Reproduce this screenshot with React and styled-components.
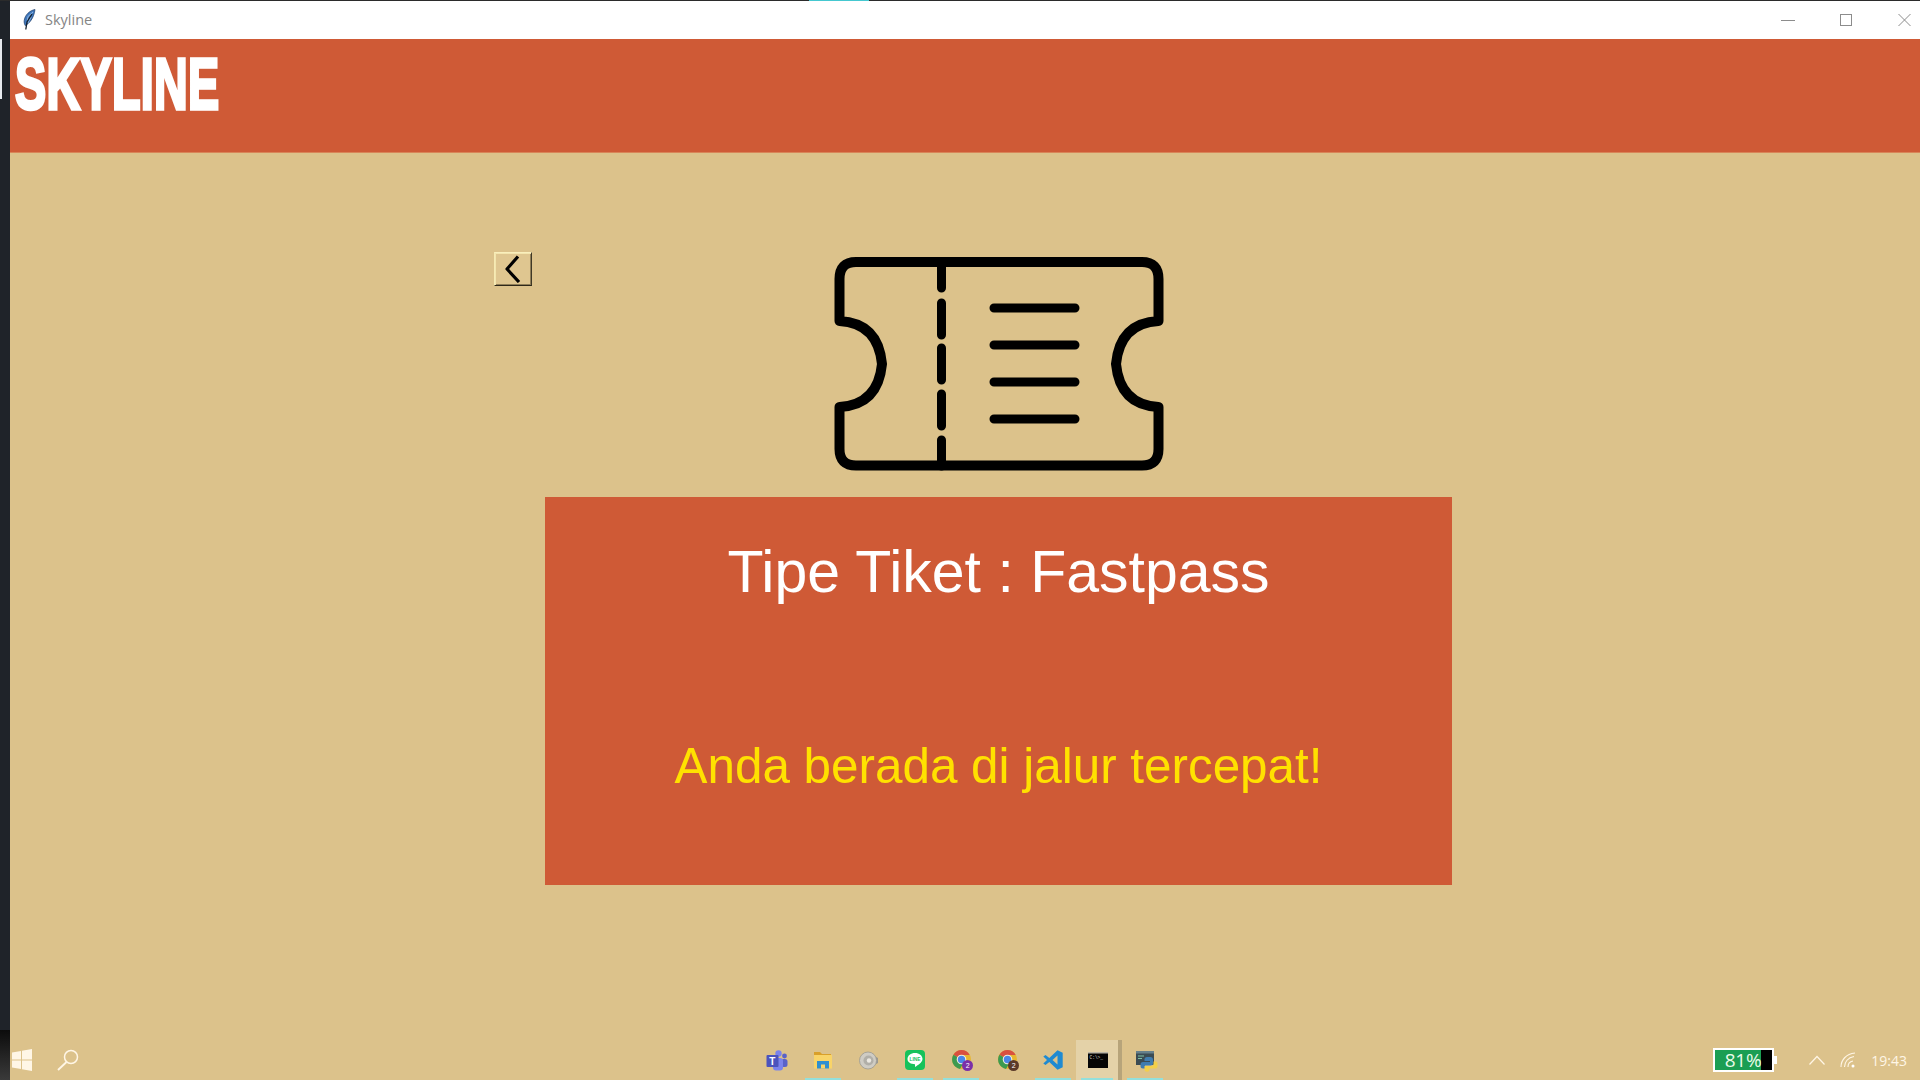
import React from "react";
import styled, { createGlobalStyle } from "styled-components";

const Global = createGlobalStyle`
  html, body { margin: 0; padding: 0; height: 100%; overflow: hidden; }
  #root { height: 100%; }
`;
const Screen = styled.div`
  width: 1920px; height: 1080px; display: flex; flex-direction: column;
  background: #1f2329; overflow: hidden;
`;
const TopEdge = styled.div`
  height: 1px; flex: none; padding-left: 809px; background: #2b2b2b;
`;
const TopAccent = styled.div`
  width: 60px; height: 1px; background: #45c8d0;
`;
const Desktop = styled.div`flex: 1; display: flex; min-height: 0;`;
const LeftStrip = styled.div`
  width: 10px; flex: none; display: flex; flex-direction: column; justify-content: space-between;
  background: #1f2329; padding-top: 38px; box-sizing: border-box;
`;
const StripMark = styled.div`width: 2px; height: 60px; background: #e8eaee;`;
const StripEnd = styled.div`height: 50px; background: linear-gradient(#0c0c0c, #3a3a3a);`;
const Window = styled.div`flex: 1; display: flex; flex-direction: column; min-width: 0;`;
const TitleBar = styled.div`
  height: 38px; flex: none; background: #fff; display: flex; align-items: center;
  padding-left: 13px;
`;
const TitleText = styled.span`
  font: 14.5px "Open Sans", sans-serif; color: #858585; margin-left: 9px; flex: 1; margin-top: -1px;
`;
const Controls = styled.div`display: flex; align-items: center; padding-right: 7px;`;
const ControlIcon = styled.svg`width: 16px; height: 16px; margin-left: 42px; display: block;`;
const Header = styled.div`
  height: 114px; flex: none; background: #cf5a36; padding: 17px 0 0 5px; box-sizing: border-box;
  border-bottom: 1px solid #d98558;
`;
const Brand = styled.h1`
  margin: 0; font: 700 72px/56px "Liberation Sans", sans-serif;
  color: #fff; -webkit-text-stroke: 3.4px #fff; letter-spacing: 0.5px;
  transform-origin: 0 0; transform: scaleX(0.648);
`;
const Body = styled.main`
  flex: 1; min-height: 0; background: #dcc28b; display: flex; flex-direction: column;
`;
const Content = styled.div`
  flex: 1; padding: 99px 0 0 484px;
`;
const TopRow = styled.div`display: flex; align-items: flex-start;`;
const BackButton = styled.button`
  width: 38px; height: 34px; padding: 0; box-sizing: border-box; background: #dfc690;
  border: 1px solid; border-color: #f9efbd #3f3826 #2e2819 #f6eab4;
  box-shadow: inset 1px 1px 0 #f3e5ae, inset -1px -1px 0 #8f7e58;
  display: flex; align-items: center; justify-content: center;
`;
const TicketArt = styled.svg`
  width: 336px; height: 221px; margin: 1px 0 0 299px; display: block; flex: none;
`;
const Panel = styled.section`
  width: 907px; height: 388px; margin: 23px 0 0 51px; background: #cf5a36;
  display: flex; flex-direction: column; align-items: center;
`;
const TicketType = styled.div`
  font: 59px/70px "Liberation Sans", Arial, sans-serif; color: #fff; margin-top: 40px;
`;
const Slogan = styled.div`
  font: 49.4px/60px "Liberation Sans", Arial, sans-serif; color: #ffe100; margin-top: 129px;
`;
const Taskbar = styled.footer`
  height: 40px; flex: none; display: flex; align-items: stretch; position: relative;
`;
const StartArea = styled.div`
  display: flex; align-items: center; padding: 0 0 0 2px; gap: 25px; width: 744px; box-sizing: border-box;
`;
const Apps = styled.div`display: flex; align-items: stretch;`;
const AppSlot = styled.div`
  width: 46px; display: flex; align-items: center; justify-content: center; position: relative;
  background: ${p => (p.$active ? "#e4d2a8" : "transparent")};
  border-right: ${p => (p.$active ? "4px solid #b7a47a" : "0")};
  padding-left: ${p => (p.$active ? "2px" : "0")};
  box-sizing: border-box;
  &::after {
    content: ""; position: absolute; left: 5px; right: 5px; bottom: 0; height: 2px;
    background: ${p => (p.$open ? "#93e0dc" : "transparent")};
  }
`;
const Tray = styled.div`
  flex: 1; display: flex; align-items: center; padding: 0 13px 0 0; justify-content: flex-end;
`;
const Battery = styled.div`
  width: 61px; height: 24px; border: 2px solid #fff; box-sizing: border-box; display: flex;
  position: relative; background: #000; margin-right: 35px;
  &::after { content: ""; position: absolute; right: -5px; top: 6px; width: 3px; height: 8px; background: #fff; }
`;
const BatteryFill = styled.div`
  width: 46px; background: #1b9e53; color: #eafbe8; font: 19px/20px "Open Sans", sans-serif; text-align: right;
  white-space: nowrap; letter-spacing: -0.3px;
`;
const TrayIcon = styled.svg`display: block; margin-right: ${p => p.$gap}px; flex: none;`;
const Clock = styled.span`font: 14px "Open Sans", sans-serif; color: #fff6e6;`;

const Feather = () => (
  <svg width="13" height="22" viewBox="0 0 13 22">
    <path d="M12 .5C7 1.500 2 5.500 1.200 11.500c-.3 2 .3 3.500.9 5C6 15 11 9 12 .5z" fill="#3f78bd" stroke="#1b3a66" strokeWidth=".7" />
    <path d="M10 3 5 7.500l-.6 4M8 8l-3 6" fill="none" stroke="#a9c8e8" strokeWidth=".8" />
    <path d="M9 5 4 13 2.800 20.500" fill="none" stroke="#14202e" strokeWidth="1.300" />
  </svg>
);
const Ticket = () => (
  <TicketArt viewBox="831 253 336 221">
    <g fill="none" stroke="#000" strokeWidth="10" strokeLinecap="round" strokeLinejoin="round">
      <path d="M856 262H1142Q1158.500 262 1158.500 279V321Q1120 323 1116 364Q1120 405 1158.500 407V449Q1158.500 465.500 1142 465.500H856Q839.500 465.500 839.500 449V407Q878 405 882 364Q878 323 839.500 321V279Q839.500 262 856 262Z" />
    </g>
    <g fill="none" stroke="#000" strokeWidth="9" strokeLinecap="round">
      <path d="M941.500 262V288M941.500 303V335M941.500 348V380M941.500 394V426M941.500 440V466" />
      <path d="M994 308H1075M994 345H1075M994 382H1075M994 419H1075" />
    </g>
  </TicketArt>
);
const Teams = () => (
  <svg width="22" height="21" viewBox="0 0 22 21">
    <circle cx="12.500" cy="3.500" r="3.200" fill="#7b83eb" /><circle cx="18.500" cy="6" r="2.400" fill="#5a62c9" />
    <rect x="15" y="9" width="6.500" height="8" rx="2.500" fill="#5a62c9" />
    <rect x="7" y="8" width="10" height="12.500" rx="3" fill="#7b83eb" />
    <rect x="0.500" y="5" width="12" height="12" rx="1" fill="#4b53bc" />
    <text x="3.200" y="14.500" fontFamily="Liberation Sans" fontWeight="700" fontSize="10" fill="#fff">T</text>
  </svg>
);
const Folder = () => (
  <svg width="20" height="18" viewBox="0 0 20 18">
    <path d="M1 1h6l2 2h9v3H1z" fill="#d9a02a" /><rect x="1" y="4" width="18" height="13.500" fill="#f9d468" />
    <rect x="4" y="10" width="12" height="7.500" fill="#2f8fd0" /><rect x="8" y="13.500" width="4" height="4" fill="#f9d468" />
  </svg>
);
const Speaker = () => (
  <svg width="20" height="21" viewBox="0 0 20 21">
    <path d="M13 5l6 3v5l-6 3z" fill="#9a9890" />
    <circle cx="9" cy="10.500" r="8.500" fill="#cfccc4" stroke="#9b9990" strokeWidth=".8" />
    <circle cx="9.500" cy="10.500" r="5" fill="#b1afa8" /><circle cx="10" cy="10.500" r="2.200" fill="#ece9e2" />
  </svg>
);
const Line = () => (
  <svg width="20" height="20" viewBox="0 0 20 20">
    <rect width="20" height="20" rx="4" fill="#16c25b" />
    <path d="M10 3c4.200 0 7.500 2.600 7.500 6 0 3.200-4.300 6-7.500 8v-2.800c-4.200 0-7.500-2-7.500-5.200C2.500 5.600 5.800 3 10 3z" fill="#fff" />
    <text x="4.500" y="11" fontFamily="Liberation Sans" fontWeight="700" fontSize="4.800" fill="#16c25b">LINE</text>
  </svg>
);
const Chrome = ({ badge }) => (
  <svg width="21" height="21" viewBox="0 0 21 21" style={{ transform: "translate(1px, 0)" }}>
    <circle cx="9.500" cy="9.500" r="9.500" fill="#e7b52f" />
    <path d="M9.500 0a9.500 9.500 0 0 1 8.200 5H9.500a4.500 4.500 0 0 0-3.900 2.250L1.400 4.700A9.500 9.500 0 0 1 9.500 0z" fill="#d9503f" />
    <path d="M1.400 4.700A9.500 9.500 0 0 0 8 18.900L11.500 13H8a4.500 4.500 0 0 1-2.400-5.750z" fill="#3d9a51" />
    <circle cx="9.500" cy="9.500" r="4.800" fill="#f3eee0" /><circle cx="9.500" cy="9.500" r="3.700" fill="#4a86e8" />
    <circle cx="15.500" cy="15.500" r="5.500" fill={badge} />
    <text x="13.800" y="18" fontFamily="Liberation Sans" fontSize="7" fill="#fff">2</text>
  </svg>
);
const VSCode = () => (
  <svg width="20" height="20" viewBox="0 0 20 20">
    <path d="M14.500.3 19.700 2.800v14.400l-5.200 2.500L6.300 12 2.500 15 .3 13.500l3.700-3.500L.3 6.500 2.500 5l3.800 3z" fill="#1f8ad2" />
    <path d="M14.500 5.500 9.500 10l5 4.500z" fill="#dcc28b" />
  </svg>
);
const Terminal = () => (
  <svg width="20" height="16" viewBox="0 0 20 16">
    <rect width="20" height="16" fill="#050505" /><rect width="20" height="1.500" fill="#b9b4a6" />
    <text x="1.500" y="6.500" fontFamily="Liberation Mono" fontSize="4.500" fill="#d8d8d8">C:\&gt;_</text>
  </svg>
);
const PythonApp = () => (
  <svg width="20" height="21" viewBox="0 0 22 21" style={{ transform: "translate(2px, 1px) scale(1.1)" }}>
    <rect x="0" y="0" width="18" height="14" fill="#3b4b53" /><rect x="0" y="0" width="18" height="2.500" fill="#66808c" />
    <path d="M2 5h6M2 7.500h4" stroke="#7fc1a5" />
    <path d="M14 6h-3a2.500 2.500 0 0 0-2.500 2.500V10H14v1H7a2.500 2.500 0 0 0-2.500 2.500V15A2.500 2.500 0 0 0 7 17.500h2v-3h5.500A2.500 2.500 0 0 0 17 12V8.500A2.500 2.500 0 0 0 14 6z" fill="#3f7cb0" />
    <path d="M17.500 10.500H20a2 2 0 0 1 1.500 2V15a2.500 2.500 0 0 1-2.500 2.500h-5.500v.8a2.500 2.500 0 0 1-5 0V15H15a2.500 2.500 0 0 0 2.500-2.500z" fill="#f3cf4a" />
  </svg>
);

const apps = [
  { key: "teams", icon: <Teams /> },
  { key: "folder", icon: <Folder />, open: true },
  { key: "speaker", icon: <Speaker /> },
  { key: "line", icon: <Line />, open: true },
  { key: "chrome1", icon: <Chrome badge="#7b2fa8" />, open: true },
  { key: "chrome2", icon: <Chrome badge="#5b3a29" /> },
  { key: "vscode", icon: <VSCode />, open: true },
  { key: "terminal", icon: <Terminal />, open: true, active: true },
  { key: "python", icon: <PythonApp />, open: true },
];

export default function App() {
  return (
    <Screen>
      <Global />
      <TopEdge><TopAccent /></TopEdge>
      <Desktop>
        <LeftStrip><StripMark /><StripEnd /></LeftStrip>
        <Window>
          <TitleBar>
            <Feather />
            <TitleText>Skyline</TitleText>
            <Controls>
              <ControlIcon viewBox="0 0 16 16"><path d="M0 8.500H14" stroke="#8c8c8c" strokeWidth="1" /></ControlIcon>
              <ControlIcon viewBox="0 0 16 16"><rect x="1.500" y="2.500" width="11" height="11" fill="none" stroke="#8c8c8c" strokeWidth="1" /></ControlIcon>
              <ControlIcon viewBox="0 0 16 16"><path d="M1.500 2 13.500 14M13.500 2 1.500 14" stroke="#8c8c8c" strokeWidth="1" /></ControlIcon>
            </Controls>
          </TitleBar>
          <Header><Brand>SKYLINE</Brand></Header>
          <Body>
            <Content>
              <TopRow>
                <BackButton aria-label="Kembali">
                  <svg width="18" height="28" viewBox="0 0 18 28">
                    <path d="M14 1.500 3 14 15 27" fill="none" stroke="#000" strokeWidth="3.200" strokeLinejoin="round" />
                  </svg>
                </BackButton>
                <Ticket />
              </TopRow>
              <Panel>
                <TicketType>Tipe Tiket : Fastpass</TicketType>
                <Slogan>Anda berada di jalur tercepat!</Slogan>
              </Panel>
            </Content>
            <Taskbar>
              <StartArea>
                <svg width="20" height="22" viewBox="0 0 20 22">
                  <path d="M0 3.500 9 2v8.500H0zM10 1.800 20 0v10.500H10zM0 11.500h9V20L0 18.500zM10 11.500h10V22l-10-1.800z" fill="#fff6e6" />
                </svg>
                <svg width="22" height="22" viewBox="0 0 22 22">
                  <circle cx="14" cy="8" r="6.500" fill="none" stroke="#fff6e6" strokeWidth="1.500" />
                  <path d="M9.500 13 1 21" stroke="#fff6e6" strokeWidth="1.800" />
                </svg>
              </StartArea>
              <Apps>
                {apps.map(a => (
                  <AppSlot key={a.key} $open={a.open} $active={a.active}>{a.icon}</AppSlot>
                ))}
              </Apps>
              <Tray>
                <Battery><BatteryFill>81%</BatteryFill></Battery>
                <TrayIcon $gap={15} width="16" height="10" viewBox="0 0 16 10">
                  <path d="M.5 9.500 8 1.500l7.500 8" fill="none" stroke="#fff6e6" strokeWidth="1.200" />
                </TrayIcon>
                <TrayIcon $gap={15} width="16" height="16" viewBox="0 0 16 16">
                  <g fill="none" stroke="#fff6e6" strokeWidth="1.100">
                    <path d="M1 15C1 8 6 2 15 1M4.500 15C4.500 10 8 5.500 14 4.500M8 15c0-3 2-5.500 5-6" />
                  </g>
                  <circle cx="13" cy="14" r="1.500" fill="#fff" />
                </TrayIcon>
                <Clock>19:43</Clock>
              </Tray>
            </Taskbar>
          </Body>
        </Window>
      </Desktop>
    </Screen>
  );
}
